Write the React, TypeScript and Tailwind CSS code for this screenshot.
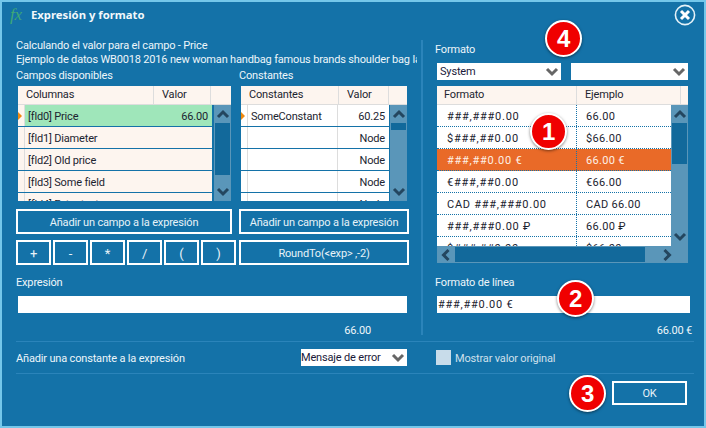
import React from 'react';

const Chevron = ({ dir, color = '#24465f', size = 14 }: { dir: 'up' | 'down' | 'left' | 'right'; color?: string; size?: number }) => {
  const points = {
    up: '2,10 7,5 12,10',
    down: '2,4 7,9 12,4',
    left: '9.5,2 4.5,7 9.5,12',
    right: '4.5,2 9.5,7 4.5,12',
  }[dir];
  return (
    <svg width={size} height={size} viewBox="0 0 14 14" fill="none">
      <polyline points={points} stroke={color} strokeWidth="3" />
    </svg>
  );
};

const VScroll = ({ thumb, height }: { thumb: number; height: string }) => (
  <div className={`${height} w-[17px] shrink-0 bg-[#5a96b9] flex flex-col items-center`}>
    <div className="h-[18px] flex items-center justify-center shrink-0">
      <Chevron dir="up" />
    </div>
    <div className="w-[15px] bg-[#12699b] shrink-0" style={{ height: thumb }} />
    <div className="flex-1" />
    <div className="h-[18px] flex items-center justify-center shrink-0">
      <Chevron dir="down" />
    </div>
  </div>
);

const Select = ({ label, className }: { label: string; className: string }) => (
  <div className={`${className} h-[17px] bg-white flex items-center justify-between pl-[3px] pr-[2px] text-[#1a1a3a]`}>
    <span className="pt-[1px]">{label}</span>
    <Chevron dir="down" color="#666666" />
  </div>
);

const OutlineButton = ({ children, className }: { children: React.ReactNode; className: string }) => (
  <div className={`${className} border-2 border-white flex items-center justify-center pt-[2px] text-[#e8f2f8]`}>{children}</div>
);

const Badge = ({ n, className }: { n: number; className: string }) => (
  <div className={`${className} absolute w-[37px] h-[37px] rounded-full bg-[#f00000] border-2 border-white shadow-[0_1px_3px_rgba(0,0,0,0.5)] flex items-center justify-center text-white text-[24px] leading-none font-bold font-['Liberation_Sans',sans-serif]`}>
    {n}
  </div>
);

const fields = ['[fld0] Price', '[fld1] Diameter', '[fld2] Old price', '[fld3] Some field', '[fld4] Extra text'];
const constants = [
  ['SomeConstant', '60.25'],
  ['', 'Node'],
  ['', 'Node'],
  ['', 'Node'],
  ['', 'Node'],
];
const formats = [
  ['###,###0.00', '66.00'],
  ['$###,##0.00', '$66.00'],
  ['###,##0.00 €', '66.00 €'],
  ['€###,##0.00', '€66.00'],
  ['CAD ###,###0.00', 'CAD 66.00'],
  ['###,###0.00 ₽', '66.00 ₽'],
  ['$###,##0.00', '$66.00'],
];

export default function App() {
  return (
    <div className="relative w-[706px] h-[428px] overflow-hidden border-2 border-[#74c7ea] bg-[#1472a8] text-white text-[11px] leading-[16px] tracking-[-0.17px] font-['Roboto',sans-serif]">
      {/* Title bar */}
      <div className="h-[28px] flex items-center pl-[8px] pr-[8px] -mt-[1px] mb-[1px]">
        <span className="w-[21px] text-[17px] italic text-[#3fa877] font-['Liberation_Serif',serif]">fx</span>
        <span className="font-bold text-[11.3px] tracking-normal text-[#f2f8fb] font-['Noto_Sans',sans-serif]">Expresión y formato</span>
        <svg className="ml-auto" width="22" height="22" viewBox="0 0 22 22" fill="none">
          <circle cx="11" cy="11" r="9.6" stroke="#e6f2f8" strokeWidth="1.6" />
          <path d="M7 7 L15 15 M15 7 L7 15" stroke="#ffffff" strokeWidth="3" />
        </svg>
      </div>

      {/* Body */}
      <div className="flex h-[311px] pl-[14px]">
        <div className="w-[405px] shrink-0 pt-[8px]">
          <div className="h-[14px] text-[#eef6fa]">Calculando el valor para el campo - Price</div>
          <div className="h-[14px] w-[401px] overflow-hidden whitespace-nowrap text-[#eef6fa]">
            Ejemplo de datos WB0018 2016 new woman handbag famous brands shoulder bag ladies
          </div>
          <div className="flex h-[14px] mt-[2px] text-[#eef6fa]">
            <span className="w-[223px]">Campos disponibles</span>
            <span>Constantes</span>
          </div>

          {/* Tables */}
          <div className="flex mt-[4px] pl-[2px]">
            <div className="w-[213px] h-[115px] overflow-hidden">
              <div className="h-[19px] bg-[#fdf5ef] border-b border-[#dddddd] flex text-[#1c2430]">
                <div className="w-[136px] pl-[8px] pt-[1px] border-r border-[#dddddd]">Columnas</div>
                <div className="w-[57px] pl-[8px] pt-[1px] border-r border-[#dddddd]">Valor</div>
              </div>
              <div className="flex">
                <div className="w-[194px] h-[96px] overflow-hidden">
                  {fields.map((f, i) => (
                    <div key={f} className="h-[22px] flex border-b border-[#1472a8] bg-[#fdf5ef] text-[#1c2430]">
                      <div className="w-[6px] flex items-center">
                        {i === 0 && <div className="w-0 h-0 border-y-[4px] border-y-transparent border-l-[4px] border-l-[#f08a10]" />}
                      </div>
                      <div className={`flex-1 flex items-center justify-between border-l border-[#dddddd] pl-[3px] pr-[4px] pt-[2px] ${i === 0 ? 'bg-[#9fe6ba]' : ''}`}>
                        <span>{f}</span>
                        {i === 0 && <span>66.00</span>}
                      </div>
                    </div>
                  ))}
                </div>
                <div className="w-[2px]" />
                <VScroll thumb={52} height="h-[96px]" />
              </div>
            </div>

            <div className="ml-[10px] w-[166px] h-[115px] overflow-hidden">
              <div className="h-[19px] bg-[#fdf5ef] border-b border-[#dddddd] flex text-[#1c2430]">
                <div className="w-[98px] pl-[8px] pt-[1px] border-r border-[#dddddd]">Constantes</div>
                <div className="w-[50px] pl-[8px] pt-[1px] border-r border-[#dddddd]">Valor</div>
              </div>
              <div className="flex">
                <div className="w-[148px] h-[96px] overflow-hidden">
                  {constants.map(([name, value], i) => (
                    <div key={i} className="h-[22px] flex border-b border-[#1472a8] bg-white text-[#1c2430]">
                      <div className="w-[6px] flex items-center">
                        {i === 0 && <div className="w-0 h-0 border-y-[4px] border-y-transparent border-l-[4px] border-l-[#f08a10]" />}
                      </div>
                      <div className="w-[91px] flex items-center border-x border-[#dddddd] pl-[3px] pt-[2px]">{name}</div>
                      <div className="flex-1 flex items-center justify-end pr-[4px] pt-[2px]">{value}</div>
                    </div>
                  ))}
                </div>
                <div className="w-[1px]" />
                <VScroll thumb={7} height="h-[96px]" />
              </div>
            </div>
          </div>

          {/* Buttons */}
          <div className="flex mt-[8px] gap-[7px]">
            <OutlineButton className="w-[216px] h-[25px]">Añadir un campo a la expresión</OutlineButton>
            <OutlineButton className="w-[170px] h-[25px]">Añadir un campo a la expresión</OutlineButton>
          </div>
          <div className="flex mt-[6px]">
            <div className="w-[223px] flex gap-[2px]">
              {['+', '-', '*', '/', '(', ')'].map((op) => (
                <OutlineButton key={op} className="w-[35px] h-[25px] text-[13px]">{op}</OutlineButton>
              ))}
            </div>
            <OutlineButton className="w-[170px] h-[25px]">RoundTo(&lt;exp&gt; ,-2)</OutlineButton>
          </div>

          <div className="mt-[10px] h-[14px] text-[#eef6fa]">Expresión</div>
          <div className="mt-[7px] ml-[2px] w-[389px] h-[17px] bg-white" />
          <div className="mt-[10px] w-[355px] h-[14px] text-right text-[#eef6fa]">66.00</div>
        </div>

        <div className="w-[2px] h-[295px] mt-[10px] bg-[#2b84ba] shrink-0" />

        <div className="ml-[12px] w-[259px] shrink-0 pt-[12px]">
          <div className="h-[14px] text-[#eef6fa]">Formato</div>
          <div className="flex gap-[10px] ml-[2px] mt-[7px]">
            <Select label="System" className="w-[124px]" />
            <Select label="" className="w-[117px]" />
          </div>
          <div className="ml-[2px] mt-[6px] w-[251px] h-[177px] bg-[#5a96b9] overflow-hidden">
            <div className="h-[19px] bg-[#fdf5ef] border-b border-[#dddddd] flex text-[#1c2430]">
              <div className="w-[140px] pl-[7px] pt-[1px] border-r border-[#dddddd]">Formato</div>
              <div className="w-[104px] pl-[8px] pt-[1px] border-r border-[#dddddd]">Ejemplo</div>
            </div>
            <div className="flex">
              <div className="w-[234px] h-[141px] overflow-hidden">
                {formats.map(([f, e], i) => (
                  <div
                    key={i}
                    className={`h-[22px] flex border-b border-dotted border-[#1472a8] ${i === 2 ? 'bg-[#e96a28] text-[#fdf0e6]' : 'bg-white text-[#1c2430]'}`}
                  >
                    <div className="w-[140px] flex items-center pl-[10px] pt-[2px] tracking-[0.75px] border-r border-dotted border-[#1472a8]">{f}</div>
                    <div className="flex-1 flex items-center pl-[9px] pt-[2px] tracking-[0.3px]">{e}</div>
                  </div>
                ))}
              </div>
              <VScroll thumb={41} height="h-[141px]" />
            </div>
            <div className="h-[17px] flex items-center">
              <div className="w-[18px] flex justify-center"><Chevron dir="left" /></div>
              <div className="w-[190px] h-[15px] bg-[#12699b]" />
              <div className="flex-1 flex justify-center"><Chevron dir="right" /></div>
            </div>
          </div>

          <div className="mt-[12px] h-[14px] text-[#eef6fa]">Formato de línea</div>
          <div className="mt-[7px] ml-[2px] w-[253px] h-[17px] bg-white text-[#1c2430] pl-[1px] flex items-center tracking-[0.75px]">###,##0.00 €</div>
          <div className="mt-[10px] w-[257px] h-[14px] text-right text-[#eef6fa]">66.00 €</div>
        </div>
      </div>

      {/* Options row */}
      <div className="ml-[14px] w-[678px] h-[33px] border-y border-[#2b84ba] flex items-center">
        <span className="w-[285px] pt-[2px] text-[#eef6fa]">Añadir una constante a la expresión</span>
        <Select label="Mensaje de error" className="w-[106px] !pl-0" />
        <div className="ml-[29px] w-[15px] h-[15px] bg-[#c8dcea]" />
        <span className="ml-[4px] pt-[2px] text-[#cfe0ec]">Mostrar valor original</span>
      </div>

      {/* Footer */}
      <div className="flex justify-end pr-[17px] pt-[7px]">
        <OutlineButton className="w-[75px] h-[24px]">OK</OutlineButton>
      </div>

      <Badge n={4} className="left-[543px] top-[18px]" />
      <Badge n={1} className="left-[528px] top-[111px]" />
      <Badge n={2} className="left-[555px] top-[278px]" />
      <Badge n={3} className="left-[567px] top-[373px]" />
    </div>
  );
}
